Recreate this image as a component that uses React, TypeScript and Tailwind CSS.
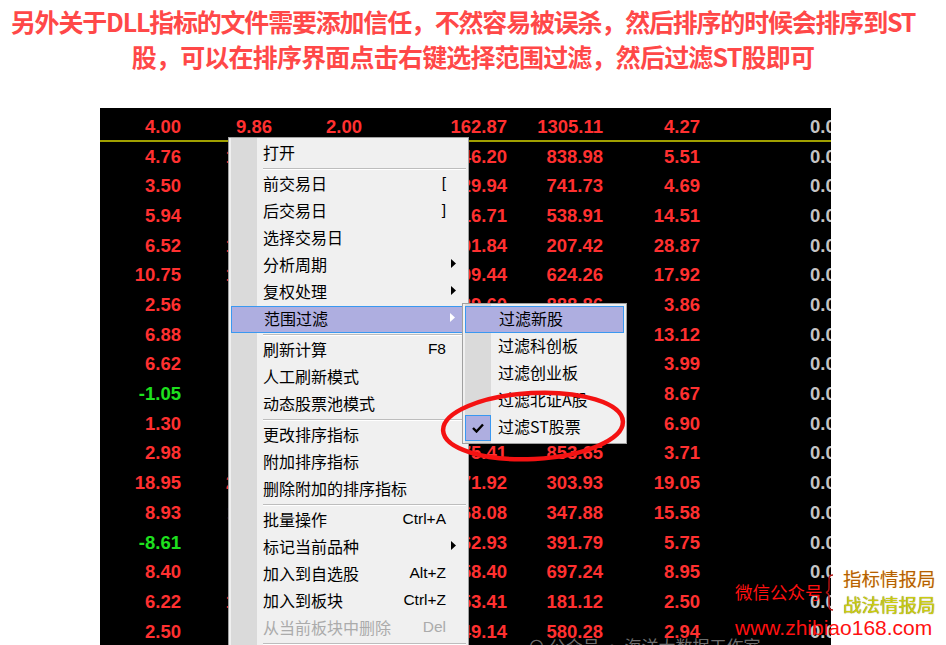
import React from 'react';

type Row = { c1: string; neg?: boolean; c2: string; c3: string; c4: string; c5: string; c6: string };

const rows: Row[] = [
  { c1: '4.76', c2: '14.52', c3: '3.11', c4: '146.20', c5: '838.98', c6: '5.51' },
  { c1: '3.50', c2: '8.73', c3: '2.45', c4: '129.94', c5: '741.73', c6: '4.69' },
  { c1: '5.94', c2: '9.12', c3: '1.87', c4: '116.71', c5: '538.91', c6: '14.51' },
  { c1: '6.52', c2: '12.08', c3: '2.73', c4: '101.84', c5: '207.42', c6: '28.87' },
  { c1: '10.75', c2: '13.66', c3: '4.02', c4: '99.44', c5: '624.26', c6: '17.92' },
  { c1: '2.56', c2: '6.41', c3: '1.35', c4: '89.60', c5: '888.86', c6: '3.86' },
  { c1: '6.88', c2: '7.94', c3: '2.20', c4: '88.15', c5: '412.37', c6: '13.12' },
  { c1: '6.62', c2: '8.05', c3: '1.92', c4: '86.73', c5: '365.04', c6: '3.99' },
  { c1: '-1.05', neg: true, c2: '5.27', c3: '0.88', c4: '84.31', c5: '298.51', c6: '8.67' },
  { c1: '1.30', c2: '4.63', c3: '1.14', c4: '81.09', c5: '512.70', c6: '6.90' },
  { c1: '2.98', c2: '6.90', c3: '1.76', c4: '75.41', c5: '853.65', c6: '3.71' },
  { c1: '18.95', c2: '21.37', c3: '5.60', c4: '71.92', c5: '303.93', c6: '19.05' },
  { c1: '8.93', c2: '11.84', c3: '3.05', c4: '68.08', c5: '347.88', c6: '15.58' },
  { c1: '-8.61', neg: true, c2: '4.12', c3: '0.97', c4: '62.93', c5: '391.79', c6: '5.75' },
  { c1: '8.40', c2: '9.55', c3: '2.64', c4: '58.40', c5: '697.24', c6: '8.95' },
  { c1: '6.22', c2: '10.48', c3: '2.31', c4: '53.41', c5: '181.12', c6: '2.50' },
  { c1: '2.50', c2: '7.16', c3: '1.49', c4: '49.14', c5: '580.28', c6: '2.94' },
];

type Item = { label: string; hotkey?: string; sub?: boolean; active?: boolean; disabled?: boolean } | 'sep';

const menu: Item[] = [
  { label: '打开' },
  'sep',
  { label: '前交易日', hotkey: '[' },
  { label: '后交易日', hotkey: ']' },
  { label: '选择交易日' },
  { label: '分析周期', sub: true },
  { label: '复权处理', sub: true },
  { label: '范围过滤', sub: true, active: true },
  'sep',
  { label: '刷新计算', hotkey: 'F8' },
  { label: '人工刷新模式' },
  { label: '动态股票池模式' },
  'sep',
  { label: '更改排序指标' },
  { label: '附加排序指标' },
  { label: '删除附加的排序指标' },
  'sep',
  { label: '批量操作', hotkey: 'Ctrl+A' },
  { label: '标记当前品种', sub: true },
  { label: '加入到自选股', hotkey: 'Alt+Z' },
  { label: '加入到板块', hotkey: 'Ctrl+Z' },
  { label: '从当前板块中删除', hotkey: 'Del', disabled: true },
  'sep',
  { label: '导出数据' },
];

const filters = ['过滤新股', '过滤科创板', '过滤创业板', '过滤北证A股', '过滤ST股票'];

function Arrow({ white }: { white?: boolean }) {
  return (
    <svg width="5" height="9" viewBox="0 0 5 9">
      <path d="M0 0 L5 4.5 L0 9 Z" fill={white ? '#ffffff' : '#000000'} />
    </svg>
  );
}

function Cells({ r }: { r: Row }) {
  return (
    <>
      <span className={`w-[81px] shrink-0 text-right ${r.neg ? 'text-[#1ee01e]' : ''}`}>{r.c1}</span>
      <span className="w-[91px] shrink-0 text-right">{r.c2}</span>
      <span className="w-[90px] shrink-0 text-right">{r.c3}</span>
      <span className="w-[145px] shrink-0 text-right">{r.c4}</span>
      <span className="w-[96px] shrink-0 text-right">{r.c5}</span>
      <span className="w-[97px] shrink-0 text-right">{r.c6}</span>
      <span className="w-[146px] shrink-0 text-right text-[#c4c4c4]">0.00</span>
    </>
  );
}

export default function App() {
  return (
    <div className="relative h-[645px] w-[946px] overflow-hidden bg-white">
      {/* heading */}
      <div className="flex flex-col items-center pt-[4px] font-['Noto_Sans_CJK_SC',sans-serif] text-[25px] font-bold leading-[35px] text-[#ff4848]">
        <p className="mr-[20px] whitespace-nowrap tracking-[-1.2px]">另外关于DLL指标的文件需要添加信任，不然容易被误杀，然后排序的时候会排序到ST</p>
        <p className="whitespace-nowrap tracking-[-0.8px]">股，可以在排序界面点击右键选择范围过滤，然后过滤ST股即可</p>
      </div>

      {/* sort table */}
      <div className="relative ml-[100px] mt-[34px] h-[537px] w-[731px] overflow-hidden bg-black font-['Liberation_Sans',sans-serif] text-[18.5px] font-bold leading-none text-[#ff3030]">
        <div className="flex h-[34px] items-center border-b-2 border-[#a0a000] pt-[6px]">
          <Cells r={{ c1: '4.00', c2: '9.86', c3: '2.00', c4: '162.87', c5: '1305.11', c6: '4.27' }} />
        </div>
        {rows.map((r, i) => (
          <div key={i} className="flex h-[29.7px] shrink-0 items-center">
            <Cells r={r} />
          </div>
        ))}

        {/* context menu */}
        <div className="absolute left-[128px] top-[29px] w-[241px] border border-[#a0a0a0] bg-[linear-gradient(to_right,#f0f0f0_0,#f0f0f0_2px,#dadada_2px,#dadada_28px,#f0f0f0_28px)] p-[2px] font-['Noto_Sans_CJK_SC',sans-serif] text-[16px] font-normal text-black">
          {menu.map((m, i) =>
            m === 'sep' ? (
              <div key={i} className="flex h-[4px] flex-col justify-center pl-[32px]">
                <div className="h-px bg-[#bdbdbd]" />
                <div className="h-px bg-white" />
              </div>
            ) : (
              <div
                key={i}
                className={`flex h-[27px] items-center pb-[4px] pl-[32px] ${
                  m.active ? 'border border-[#3a98f0] bg-[#aeaee0] pl-[31px]' : ''
                } ${m.disabled ? 'text-[#ababab]' : ''}`}
              >
                <span className="flex-1 whitespace-nowrap">{m.label}</span>
                <span className="font-['Liberation_Sans',sans-serif] text-[15.5px]">{m.hotkey}</span>
                <span className="flex w-[20px] justify-start pl-[5px]">{m.sub && <Arrow white={m.active} />}</span>
              </div>
            )
          )}
        </div>

        {/* sub menu */}
        <div className="absolute left-[362px] top-[195px] w-[165px] border border-[#a0a0a0] bg-[linear-gradient(to_right,#f0f0f0_0,#f0f0f0_2px,#dadada_2px,#dadada_28px,#f0f0f0_28px)] p-[2px] font-['Noto_Sans_CJK_SC',sans-serif] text-[16px] font-normal text-black">
          {filters.map((f, i) => (
            <div
              key={f}
              className={`flex h-[27px] items-center ${i === 0 ? 'border border-[#3a98f0] bg-[#aeaee0]' : ''}`}
            >
              <span className="flex w-[33px] justify-start">
                {i === 4 && (
                  <span className="flex h-[26px] w-[26px] items-center justify-center border border-[#3a98f0] bg-[#aeaee0]">
                    <svg width="12" height="10" viewBox="0 0 12 10">
                      <path d="M1 5 L4.5 8.5 L11 1.5" fill="none" stroke="#000" strokeWidth="2.4" />
                    </svg>
                  </span>
                )}
              </span>
              <span className="whitespace-nowrap pb-[4px]">{f}</span>
            </div>
          ))}
        </div>

        {/* red ellipse annotation */}
        <svg className="absolute left-[336px] top-[280px]" width="194" height="76" viewBox="0 0 194 76">
          <ellipse cx="97" cy="38" rx="90" ry="33" fill="none" stroke="#f41212" strokeWidth="4.5" transform="rotate(-3 97 38)" />
        </svg>

        <div className="absolute left-[428px] top-[529px] whitespace-nowrap font-['Noto_Sans_CJK_SC',sans-serif] text-[17px] font-normal text-[#6e6e6e]">
          ⊙ 公众号 · 海洋大数据工作室
        </div>
      </div>

      {/* site watermark */}
      <div className="absolute left-[735px] top-[580px] whitespace-nowrap font-['Noto_Sans_CJK_SC',sans-serif] text-[17.5px] leading-[24px] text-[#ff1010]">
        微信公众号
      </div>
      <svg className="absolute left-[825px] top-[574px]" width="9" height="37" viewBox="0 0 9 37">
        <path d="M8 1 C4 1 4 3 4 8 L4 14 C4 17 3 18 1 18.5 C3 19 4 20 4 23 L4 29 C4 34 4 36 8 36" fill="none" stroke="#b01010" strokeWidth="1.5" />
      </svg>
      <div className="absolute left-[843px] top-[566px] whitespace-nowrap font-['Noto_Sans_CJK_SC',sans-serif] text-[18.5px] leading-[24px] text-[#b56000] [text-shadow:0_0_1px_#ffe0a0]">
        指标情报局
      </div>
      <div className="absolute left-[843px] top-[592px] whitespace-nowrap font-['Noto_Sans_CJK_SC',sans-serif] text-[18.5px] leading-[24px] text-[#cccc10] [text-shadow:0_0_1px_#707000]">
        战法情报局
      </div>
      <div className="absolute left-[735px] top-[615px] whitespace-nowrap font-['Liberation_Sans',sans-serif] text-[21px] leading-[26px] text-[#ff1010]">
        www.zhibiao168.com
      </div>
    </div>
  );
}
